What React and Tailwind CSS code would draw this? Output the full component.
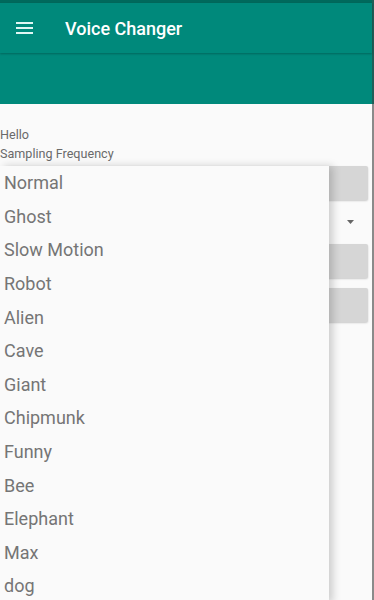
import React from "react";

const items = ["Normal","Ghost","Slow Motion","Robot","Alien","Cave","Giant","Chipmunk","Funny","Bee","Elephant","Max","dog"];

export default function App() {
  return (
    <div className="flex h-[600px] w-[374px] overflow-hidden bg-[#fafafa]" style={{ fontFamily: "Roboto, 'Noto Sans', sans-serif" }}>
      <div className="flex w-[372px] flex-col">
        <div className="h-[3px] bg-[#00695c]" />
        <div className="relative z-10 flex h-[50px] items-center bg-[#00897b] shadow-[0_1px_2px_rgba(0,0,0,0.25)]">
          <div className="ml-[16px] flex w-[17px] flex-col gap-[3px]">
            <div className="h-[2px] bg-[#e0f7f4]" />
            <div className="h-[2px] bg-[#e0f7f4]" />
            <div className="h-[2px] bg-[#e0f7f4]" />
          </div>
          <div className="ml-[32px] text-[18px] font-medium text-white">Voice Changer</div>
        </div>
        <div className="h-[51px] bg-[#00897b]" />
        <div className="relative flex-1">
          <div className="pt-[21px] text-[12.6px] leading-[19px] text-[#6a6a6a]">
            <div>Hello</div>
            <div>Sampling Frequency</div>
          </div>
          <div className="mt-[3px] flex flex-col px-[4px]">
            <div className="h-[34px] rounded-[2px] bg-[#d6d6d6] shadow-[0_1px_2px_rgba(0,0,0,0.2)]" />
            <div className="flex h-[44px] items-center justify-end pr-[14px]">
              <svg width="7" height="4" viewBox="0 0 7 4"><path d="M0 0h7L3.5 4z" fill="#666" /></svg>
            </div>
            <div className="h-[34px] rounded-[2px] bg-[#d6d6d6] shadow-[0_1px_2px_rgba(0,0,0,0.2)]" />
            <div className="mt-[10px] h-[34px] rounded-[2px] bg-[#d6d6d6] shadow-[0_1px_2px_rgba(0,0,0,0.2)]" />
          </div>
          <div className="absolute left-0 top-[62px] w-[329px] bg-[#fafafa] shadow-[4px_0_8px_rgba(0,0,0,0.18)]">
            {items.map((t) => (
              <div key={t} className="flex h-[33.6px] items-center pl-[4px] text-[18px] text-[#757575]">{t}</div>
            ))}
          </div>
        </div>
      </div>
      <div className="flex w-[2px] flex-col">
        <div className="h-[104px] bg-[#1f5f58]" />
        <div className="flex-1 bg-[#8a8a8a]" />
      </div>
    </div>
  );
}
